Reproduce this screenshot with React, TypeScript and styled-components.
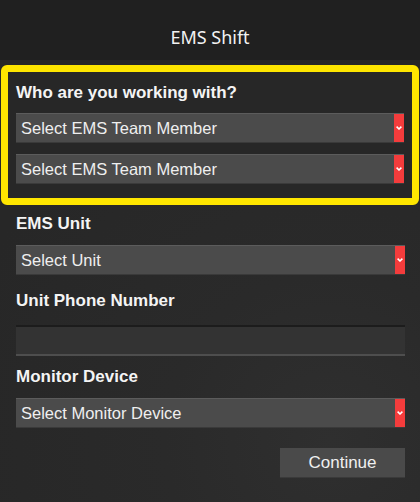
import React from "react";
import styled, { createGlobalStyle } from "styled-components";

const Global = createGlobalStyle`
  html, body { margin: 0; padding: 0; background: #282828; }
  body { font-family: "Liberation Sans", Arial, sans-serif; }
  * { box-sizing: border-box; }
`;

const Page = styled.div`
  width: 420px;
  height: 502px;
  overflow: hidden;
  background: radial-gradient(circle at 330px 440px, #2f2f2f 0%, #2a2a2a 30%, #272727 70%);
  display: flex;
  flex-direction: column;
`;

const Header = styled.header`
  height: 60px;
  background: #202020;
  display: flex;
  align-items: flex-end;
  justify-content: center;
  padding-bottom: 11px;
  color: #f2f2f2;
  font-family: "Noto Sans", "Open Sans", sans-serif;
  font-size: 18px;
`;

const Highlight = styled.section`
  margin: 5px 1px 0 1px;
  border: 7px solid #ffe600;
  border-radius: 6px;
  background: #272727;
  padding: 11px 8px 14px 8px;
  display: flex;
  flex-direction: column;
`;

const Body = styled.div`
  padding: 9px 15px 0 16px;
  display: flex;
  flex-direction: column;
`;

const Label = styled.div<{ $mb: number; $mt?: number }>`
  font-weight: bold;
  font-size: 17px;
  line-height: 20px;
  color: #f4f4f4;
  margin-top: ${(p) => p.$mt ?? 0}px;
  margin-bottom: ${(p) => p.$mb}px;
`;

const SelectBox = styled.div<{ $mt?: number }>`
  height: 30px;
  margin-top: ${(p) => p.$mt ?? 0}px;
  display: flex;
  background: #4b4b4b;
  border-top: 1px solid #5c5c5c;
  border-bottom: 1px solid #3a3a3a;
`;

const SelectText = styled.div`
  flex: 1;
  padding-left: 5px;
  display: flex;
  align-items: center;
  color: #efefef;
  font-size: 16.5px;
`;

const Caret = styled.div`
  width: 10px;
  background: #f43c3c;
  display: flex;
  align-items: center;
  justify-content: center;
`;

const Input = styled.div`
  height: 31px;
  background: #333333;
  border-top: 2px solid #1c1c1c;
  border-bottom: 2px solid #4e4e4e;
`;

const Actions = styled.div`
  display: flex;
  justify-content: flex-end;
  margin-top: 20px;
`;

const Button = styled.div`
  width: 125px;
  height: 30px;
  background: #4a4a4a;
  border-bottom: 1px solid #3a3a3a;
  display: flex;
  align-items: center;
  justify-content: center;
  color: #f0f0f0;
  font-size: 17px;
`;

const Select = ({ text, mt }: { text: string; mt?: number }) => (
  <SelectBox $mt={mt}>
    <SelectText>{text}</SelectText>
    <Caret>
      <svg width="6" height="4" viewBox="0 0 6 4">
        <polyline points="0.6,0.6 3,3 5.4,0.6" fill="none" stroke="#fff" strokeWidth="1.5" />
      </svg>
    </Caret>
  </SelectBox>
);

export default function App() {
  return (
    <Page>
      <Global />
      <Header>EMS Shift</Header>
      <Highlight>
        <Label $mb={10}>Who are you working with?</Label>
        <Select text="Select EMS Team Member" />
        <Select text="Select EMS Team Member" mt={11} />
      </Highlight>
      <Body>
        <Label $mb={11}>EMS Unit</Label>
        <Select text="Select Unit" />
        <Label $mt={16} $mb={14}>Unit Phone Number</Label>
        <Input />
        <Label $mt={11} $mb={11}>Monitor Device</Label>
        <Select text="Select Monitor Device" />
        <Actions>
          <Button>Continue</Button>
        </Actions>
      </Body>
    </Page>
  );
}
